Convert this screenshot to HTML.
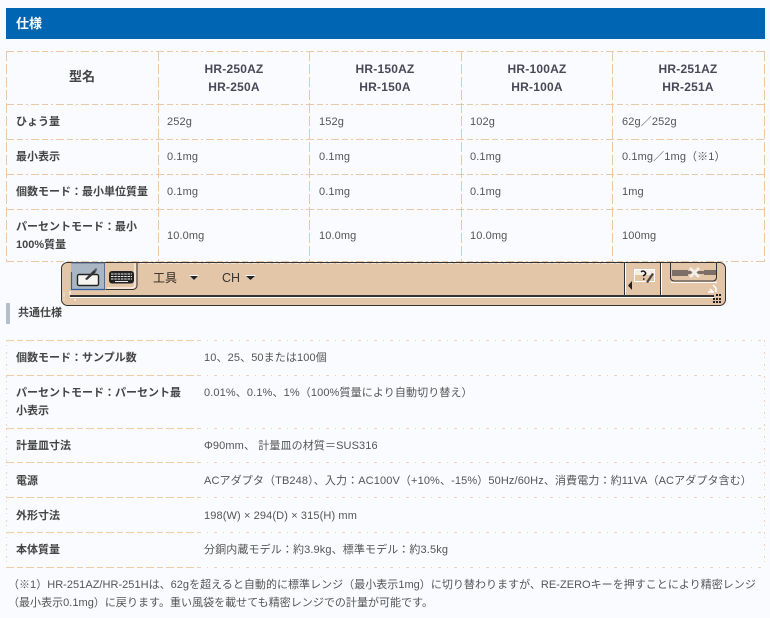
<!DOCTYPE html>
<html lang="ja"><head><meta charset="utf-8"><title>仕様</title>
<style>
html,body{margin:0;padding:0;background:#fafbfe;}
#p{position:relative;width:770px;height:618px;overflow:hidden;background:#fafbfe;font-family:"Liberation Sans","Noto Sans CJK JP",sans-serif;font-size:11px;color:#555;}
.t{position:absolute;white-space:nowrap;line-height:18px;margin-top:1px;letter-spacing:.12px;}
.b{font-weight:700;color:#444;letter-spacing:0;}
.c{text-align:center;font-size:12px;line-height:18px;font-weight:700;color:#484858;letter-spacing:.2px;}
.h,.v,.s,.w,.x{position:absolute;}
.h{height:1px;background:repeating-linear-gradient(90deg,#e8c8a6 0 8px,transparent 8px 11px,#e8c8a6 11px 17px,transparent 17px 20px,#e8c8a6 20px 22px,transparent 22px 25px);}
.s{height:1px;left:198px;width:566px;background:repeating-linear-gradient(90deg,#efd3b2 0 3px,transparent 3px 9px,#efd3b2 9px 10px,transparent 10px 16px);}
.v{width:1px;background:repeating-linear-gradient(180deg,#e8c8a6 0 10px,transparent 10px 13px);}
.w{height:1px;left:6px;width:192px;background:repeating-linear-gradient(90deg,#eccda6 0 8px,transparent 8px 11px,#eccda6 11px 17px,transparent 17px 20px);}
.x{width:1px;top:340px;height:227px;background:repeating-linear-gradient(180deg,#efd3b2 0 2px,transparent 2px 5px,#efd3b2 5px 6px,transparent 6px 12px);}
svg{position:absolute;left:0;top:0;}
</style></head><body><div id="p">
<div style="position:absolute;left:6px;top:8px;width:759px;height:31px;background:#0066b3;"></div>
<div class="t" style="left:16px;top:14px;color:#fff;font-weight:700;font-size:13px;letter-spacing:0;">仕様</div>

<div class="h" style="left:6px;top:51px;width:758px;"></div>
<div class="h" style="left:6px;top:104px;width:758px;"></div>
<div class="h" style="left:6px;top:139px;width:758px;"></div>
<div class="h" style="left:6px;top:174px;width:758px;"></div>
<div class="h" style="left:6px;top:209px;width:758px;"></div>
<div class="h" style="left:6px;top:261px;width:758px;"></div>
<div class="v" style="left:6px;top:51px;height:211px;"></div>
<div class="v" style="left:158px;top:51px;height:211px;"></div>
<div class="v" style="left:309px;top:51px;height:211px;"></div>
<div class="v" style="left:461px;top:51px;height:211px;"></div>
<div class="v" style="left:612px;top:51px;height:211px;"></div>
<div class="v" style="left:764px;top:51px;height:211px;"></div>

<div class="t b" style="left:6px;width:152px;text-align:center;top:67px;font-size:13px;">型名</div>
<div class="t c" style="left:158px;width:152px;top:59px;">HR-250AZ<br>HR-250A</div>
<div class="t c" style="left:309px;width:152px;top:59px;">HR-150AZ<br>HR-150A</div>
<div class="t c" style="left:461px;width:152px;top:59px;">HR-100AZ<br>HR-100A</div>
<div class="t c" style="left:612px;width:152px;top:59px;">HR-251AZ<br>HR-251A</div>

<div class="t b" style="left:16px;top:112px;">ひょう量</div>
<div class="t" style="left:167px;top:112px;">252g</div><div class="t" style="left:319px;top:112px;">152g</div><div class="t" style="left:470px;top:112px;">102g</div><div class="t" style="left:622px;top:112px;">62g／252g</div>
<div class="t b" style="left:16px;top:147px;">最小表示</div>
<div class="t" style="left:167px;top:147px;">0.1mg</div><div class="t" style="left:319px;top:147px;">0.1mg</div><div class="t" style="left:470px;top:147px;">0.1mg</div><div class="t" style="left:622px;top:147px;">0.1mg／1mg（※1）</div>
<div class="t b" style="left:16px;top:182px;">個数モード：最小単位質量</div>
<div class="t" style="left:167px;top:182px;">0.1mg</div><div class="t" style="left:319px;top:182px;">0.1mg</div><div class="t" style="left:470px;top:182px;">0.1mg</div><div class="t" style="left:622px;top:182px;">1mg</div>
<div class="t b" style="left:16px;top:217px;">パーセントモード：最小<br>100%質量</div>
<div class="t" style="left:167px;top:226px;">10.0mg</div><div class="t" style="left:319px;top:226px;">10.0mg</div><div class="t" style="left:470px;top:226px;">10.0mg</div><div class="t" style="left:622px;top:226px;">100mg</div>

<div style="position:absolute;left:6px;top:303px;width:4px;height:21px;background:#b4bfcc;"></div>
<div class="t b" style="left:18px;top:303px;">共通仕様</div>

<div class="w" style="top:340px;"></div><div class="s" style="top:340px;"></div>
<div class="w" style="top:375px;"></div><div class="s" style="top:375px;"></div>
<div class="w" style="top:428px;"></div><div class="s" style="top:428px;"></div>
<div class="w" style="top:462px;"></div><div class="s" style="top:462px;"></div>
<div class="w" style="top:497px;"></div><div class="s" style="top:497px;"></div>
<div class="w" style="top:532px;"></div><div class="s" style="top:532px;"></div>
<div class="w" style="top:567px;"></div><div class="s" style="top:567px;"></div>
<div class="x" style="left:6px;"></div>
<div class="x" style="left:764px;"></div>

<div class="t b" style="left:16px;top:348px;">個数モード：サンプル数</div>
<div class="t" style="left:204px;top:348px;">10、25、50または100個</div>
<div class="t b" style="left:16px;top:383px;">パーセントモード：パーセント最</div>
<div class="t b" style="left:16px;top:401px;">小表示</div>
<div class="t" style="left:204px;top:383px;">0.01%、0.1%、1%（100%質量により自動切り替え）</div>
<div class="t b" style="left:16px;top:436px;">計量皿寸法</div>
<div class="t" style="left:204px;top:436px;">Φ90mm、 計量皿の材質＝SUS316</div>
<div class="t b" style="left:16px;top:471px;">電源</div>
<div class="t" style="left:204px;top:471px;">ACアダプタ（TB248）、入力：AC100V（+10%、-15%）50Hz/60Hz、消費電力：約11VA（ACアダプタ含む）</div>
<div class="t b" style="left:16px;top:506px;">外形寸法</div>
<div class="t" style="left:204px;top:506px;">198(W) × 294(D) × 315(H) mm</div>
<div class="t b" style="left:16px;top:540px;">本体質量</div>
<div class="t" style="left:204px;top:540px;">分銅内蔵モデル：約3.9kg、標準モデル：約3.5kg</div>

<div class="t" style="left:8px;top:575px;letter-spacing:.03px;">（※1）HR-251AZ/HR-251Hは、62gを超えると自動的に標準レンジ（最小表示1mg）に切り替わりますが、RE-ZEROキーを押すことにより精密レンジ</div>
<div class="t" style="left:8px;top:593px;letter-spacing:.03px;">（最小表示0.1mg）に戻ります。重い風袋を載せても精密レンジでの計量が可能です。</div>

<svg width="770" height="618" viewBox="0 0 770 618">
<rect x="61.5" y="262.5" width="664" height="43" rx="6" fill="#e3c5a8" stroke="#333"/>
<path d="M64 292v9M140 263.500h480" stroke="#fff" stroke-dasharray="5 2" opacity=".5"/>
<path d="M70 296H714" stroke="#333" stroke-width="2"/>
<path d="M70 297.500H714" stroke="#fff"/>
<path d="M70 291v4M74 300h2" stroke="#fff"/>
<rect x="71" y="263" width="34" height="26" fill="#aab6c4"/>
<path d="M71.500 272v17.500H105" fill="none" stroke="#2f5fa8" stroke-width="1.200"/>
<path d="M71.500 263H104.500V289" fill="none" stroke="#5a6f90"/>
<path d="M105.500 289.500H133a4 4 0 0 0 4-4V263" fill="none" stroke="#333"/>
<path d="M107 288H132a3 3 0 0 0 3-3V263" fill="none" stroke="#fff"/>
<rect x="77.500" y="274.500" width="21" height="11" rx="1.500" fill="#f6f4f0" stroke="#222" stroke-width="1.400"/>
<path d="M85 279l9-9 2 2-9 8z" fill="#333"/><path d="M94 270l2-2 1 1-1 3z" fill="#555"/>
<rect x="109" y="271" width="25" height="12.500" rx="3" fill="#222"/>
<path d="M111 274h21M111 276.500h21M111 279h21" stroke="#e9e9e9" stroke-dasharray="2.500 .8"/>
<path d="M115 281.500h13" stroke="#e9e9e9"/>
<text x="153" y="282" font-family="Liberation Sans,Noto Sans CJK JP,sans-serif" font-size="12" fill="#2a241f">工具</text>
<path d="M189 275h10l-5 5z" fill="#fff"/><path d="M190 276h8l-4 4z" fill="#222"/>
<text x="222" y="282" font-family="Liberation Sans,sans-serif" font-size="12.500" fill="#3a3530">CH</text>
<path d="M245 275h11l-5.500 5z" fill="#fff"/><path d="M246 276h9l-4.500 4z" fill="#222"/>
<path d="M624.500 263v32M660.500 263v32" stroke="#333"/>
<path d="M625.500 263v32M661.500 263v32" stroke="#fff"/>
<path d="M632 281v9l-4-4.500z" fill="#222"/>
<rect x="634.500" y="269.500" width="20" height="12" fill="#e3c5a8" stroke="#fff"/>
<rect x="635" y="270" width="19" height="5" fill="#f5efe8"/>
<path d="M641 272q2-2 4 0t-2 4M643 279h1.500" fill="none" stroke="#111" stroke-width="1.500"/>
<path d="M646 282l6-9 2 1-6 9z" fill="#444"/>
<path d="M670.500 263v14q0 4 4 4h38q4 0 4-4v-14" fill="#e3c5a8" stroke="#333"/>
<path d="M671 282.500h46" stroke="#fff"/>
<rect x="672" y="270" width="16" height="6" fill="#7d6f66"/>
<rect x="704" y="270" width="12" height="5" fill="#7d6f66"/>
<path d="M688 272.500h16" stroke="#7d6f66" stroke-width="3"/>
<path d="M690 268l9 9m0-9l-9 9" stroke="#f5efe8" stroke-width="3"/>
<path d="M708 292h6M710 289l3 3M713 285l3 3M716 288v4" stroke="#fff" stroke-width="1.500" fill="none"/>
<path d="M716 295h2M719 295h2M713 299h2M716 299h2M719 299h2M713 302h2M716 302h2M719 302h2" stroke="#222" stroke-width="2"/>
</svg>
</div></body></html>
